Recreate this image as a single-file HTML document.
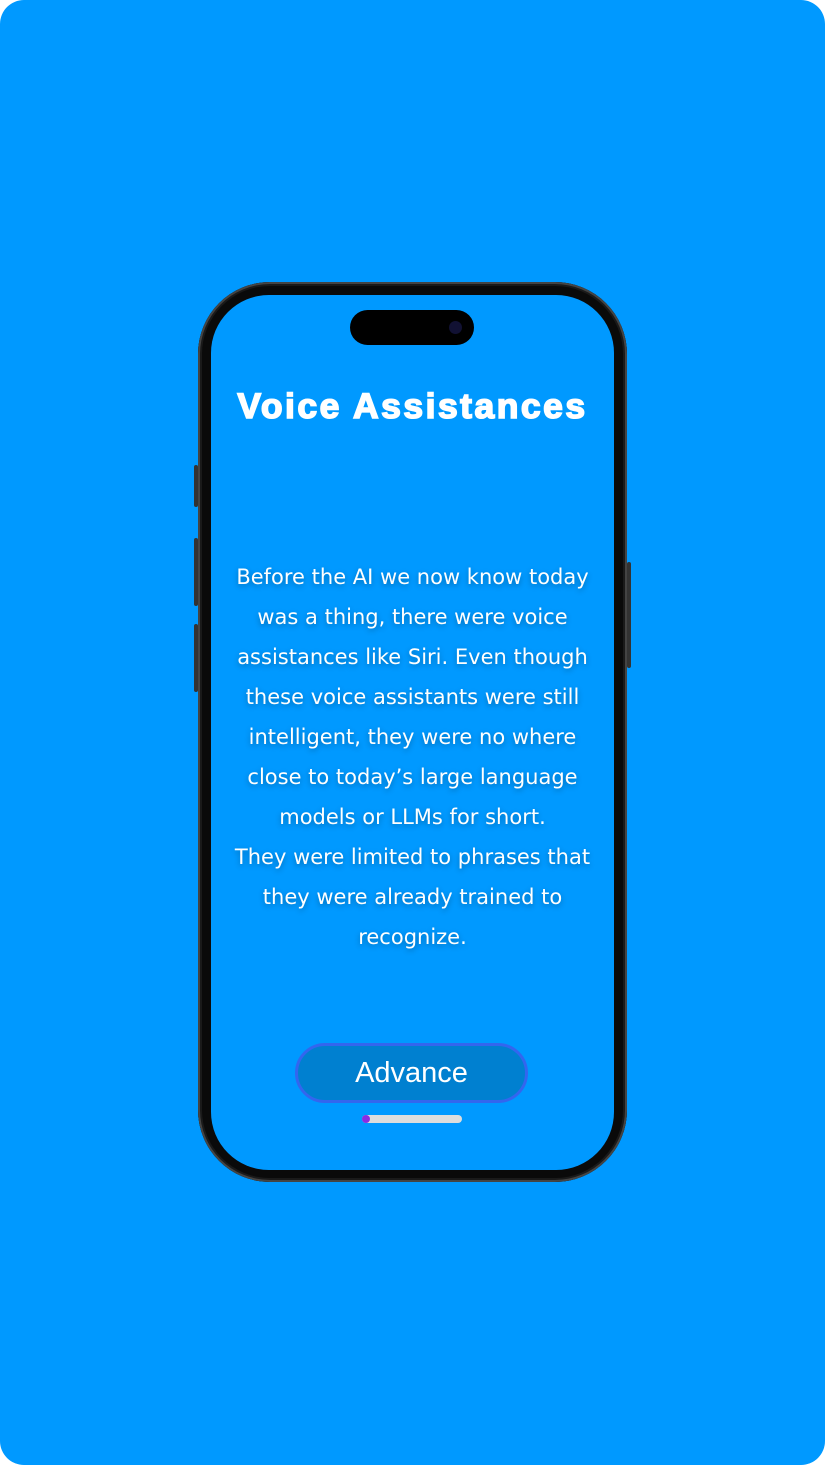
<!DOCTYPE html>
<html><head><style>
body{margin:0;width:825px;height:1465px;background:#fff;overflow:hidden;font-family:"Liberation Sans",sans-serif}
.page{position:absolute;left:0;top:0;width:825px;height:1465px;border-radius:24px;background:#0099ff}
.phone{position:absolute;left:198px;top:282px;width:429px;height:900px;border-radius:72px;background:#0a0a0a;box-shadow:inset 0 0 0 2px #444,inset 0 0 0 4px #1a1a1a}
.screen{position:absolute;left:13px;top:13px;width:403px;height:875px;border-radius:58px;background:#0099ff;overflow:hidden}
.island{position:absolute;left:139px;top:15px;width:124px;height:35px;border-radius:18px;background:#000}
.cam{position:absolute;right:12px;top:11px;width:13px;height:13px;border-radius:50%;background:#111133}
.btn-side{position:absolute;background:#333;width:4px;border-radius:2px}
h1{position:absolute;left:0;right:0;top:91px;margin:0;text-align:center;color:#fff;font-size:35.5px;font-weight:900;letter-spacing:2.5px;font-family:"Liberation Sans",sans-serif;-webkit-text-stroke:1.6px #fff}
.body{position:absolute;left:10px;right:10px;top:262px;text-align:center;color:#fff;line-height:40px;font-family:"DejaVu Sans","Liberation Sans",sans-serif;font-size:21px;text-shadow:0 2px 6px rgba(0,0,0,.3)}
.adv{position:absolute;left:84px;top:748px;width:227px;height:54px;border:3px solid #3366ee;border-radius:30px;background:#0080d0;color:#fff;font-size:29px;text-align:center;line-height:54px}
.bar{position:absolute;left:151px;top:820px;width:100px;height:8px;border-radius:4px;background:#ddd}
.dot{position:absolute;left:0;top:0;width:8px;height:8px;border-radius:50%;background:#8a2be2}
</style></head><body><div class="page">
<div class="btn-side" style="left:194px;top:465px;height:42px"></div>
<div class="btn-side" style="left:194px;top:538px;height:68px"></div>
<div class="btn-side" style="left:194px;top:624px;height:68px"></div>
<div class="btn-side" style="left:627px;top:562px;height:106px"></div>
<div class="phone"><div class="screen">
<div class="island"><div class="cam"></div></div>
<h1>Voice Assistances</h1>
<div class="body">Before the AI we now know today was a thing, there were voice assistances like Siri. Even though these voice assistants were still intelligent, they were no where close to today’s large language models or LLMs for short.<br>They were limited to phrases that they were already trained to recognize.</div>
<div class="adv">Advance</div>
<div class="bar"><div class="dot"></div></div>
</div></div>
</div></body></html>
